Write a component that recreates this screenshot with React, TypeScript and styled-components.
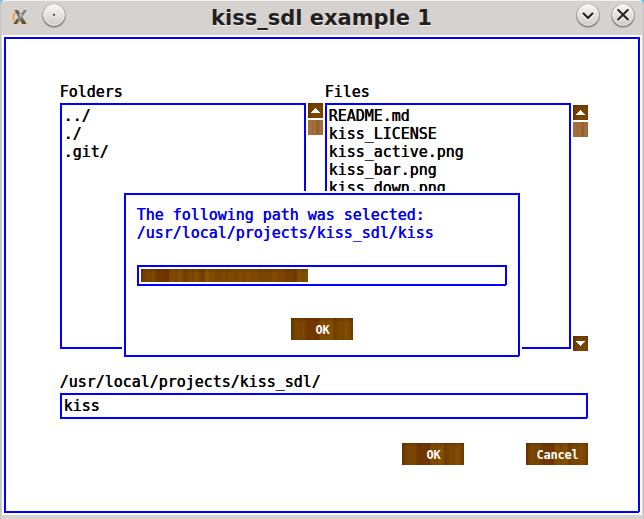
import React from "react";
import styled, { createGlobalStyle, css } from "styled-components";

const GlobalStyle = createGlobalStyle`
  * { box-sizing: border-box; }
  body { margin: 0; background: #d6d2cf; overflow: hidden; }
`;

const blue = "#0000ff";
const mono = '"DejaVu Sans Mono", monospace';

/* Regular glyphs widened sideways only: heavy stems, thin bars. */
const smearedText = css`
  font: 15px/18px ${mono};
  letter-spacing: -0.03px;
  white-space: pre;
  text-shadow: -0.6px 0 0 currentColor;
`;

const woodGrain = css`
  background:
    linear-gradient(180deg, rgba(50, 20, 0, 0.22), transparent 4px),
    repeating-linear-gradient(90deg, rgba(55, 22, 0, 0.12) 0 1px, transparent 3px 8px, rgba(60, 25, 0, 0.12) 10px, transparent 12px 17px),
    linear-gradient(90deg, #683800 0, #784400 5px, #7f4900 12px, #743b00 15px, #703500 27px, #7f4a00 29px, #824e00 41px, #743f00 43px, #824e00 55px, #733e00 62px, #895600 66px, #7b4700 75px, #824d00 110px, #784500 125px, #814b00 135px, #723900 155px, #805000 157px);
`;

const Window = styled.div`
  width: 644px;
  height: 519px;
  display: flex;
  flex-direction: column;
  background: #d6d2cf;
  border-left: 1px solid #c5c3c2;
  border-right: 1px solid #c5c3c2;
  border-top: 1px solid #f2f0ef;
  border-radius: 5px 5px 0 0;
`;

const Desktop = styled.div`
  background: linear-gradient(180deg, #65c5ee 0 8px, #d6d2cf 8px 513px, #91c9de 519px);
`;

const TitleBar = styled.header`
  height: 34px;
  flex: none;
  display: grid;
  grid-template-columns: 11px 16px 14px 24px 1fr 24px 11px 24px 8px;
  align-items: start;
  background: #d6d2cf;
  border-radius: 5px 5px 0 0;
`;

const AppIcon = styled.svg`
  grid-column: 2;
  margin-top: 8px;
`;

const RoundIcon = styled.svg<{ $column: number }>`
  grid-column: ${(p) => p.$column};
  margin-top: 2px;
`;

const Title = styled.h1`
  grid-column: 5;
  margin: 4px 0 0 145px;
  font: bold 21px/27px "DejaVu Sans", sans-serif;
  white-space: nowrap;
  color: #221f1e;
  text-shadow: 0 1px 0 #f4f2f1;
`;

const Client = styled.main`
  width: 640px;
  height: 480px;
  margin-left: 1px;
  padding: 2px;
  background: #fff;
`;

const Framed = styled.div`
  position: relative;
  border: 2px solid ${blue};
  background: #fff;
  &::after {
    content: "";
    position: absolute;
    right: -2px;
    bottom: -2px;
    width: 1px;
    height: 1px;
    background: #fff;
  }
`;

const MainFrame = styled(Framed)`
  height: 476px;
  width: 636px;
  padding: 43px 0 0 54px;
`;

const Lists = styled.div`
  display: flex;
  height: 267px;
  gap: 2px;
`;

const Label = styled.div`
  height: 21px;
  ${smearedText}
  line-height: 20px;
  color: #000;
`;

const ListBox = styled(Framed)`
  width: 246px;
  height: 246px;
  overflow: hidden;
  padding: 2px 0 0 2px;
`;

const ListItem = styled.div`
  ${smearedText}
  color: #000;
`;

const ScrollBar = styled.div<{ $offset: number }>`
  width: 15px;
  height: 246px;
  margin-top: ${(p) => 21 + p.$offset}px;
  display: flex;
  flex-direction: column;
`;

const ScrollButton = styled.div<{ $last?: boolean }>`
  width: 15px;
  height: 15px;
  flex: none;
  margin-top: ${(p) => (p.$last ? "auto" : "0")};
  ${woodGrain}
  svg { display: block; }
`;

const Knob = styled.div`
  width: 15px;
  height: 15px;
  margin-top: 2px;
  background: linear-gradient(90deg, #a26e38, #a4733e 3px, #976433 5px, #a6753f 6px, #966232 9px, #8d5b2e 10px, #a3713c 12px, #996836);
`;

const PathLabel = styled(Label)`
  margin-top: 23px;
`;

const Entry = styled(Framed)`
  width: 528px;
  height: 26px;
  padding: 2px 0 0 2px;
  ${smearedText}
`;

const Actions = styled.div`
  width: 528px;
  margin-top: 24px;
  display: flex;
  justify-content: flex-end;
  gap: 62px;
`;

const WoodButton = styled.button`
  width: 62px;
  height: 22px;
  border: 0;
  padding: 1px 0 0 1px;
  ${woodGrain}
  color: #fff;
  font: bold 12px/22px ${mono};
  letter-spacing: -0.22px;
  text-align: center;
`;

const Dialog = styled(Framed)`
  position: absolute;
  left: 118px;
  top: 154px;
  width: 396px;
  height: 164px;
  padding: 11px 11px 0;
  outline: 2px solid #fff;
  display: flex;
  flex-direction: column;
  align-items: center;
`;

const Message = styled.div`
  width: 100%;
  ${smearedText}
  color: #0000f0;
`;

const ProgressTrack = styled(Framed)`
  width: 370px;
  height: 21px;
  margin: 23px 0 32px;
  padding: 2px;
`;

const ProgressFill = styled.div`
  width: 167px;
  height: 13px;
  ${woodGrain}
`;

const Arrow = ({ down = false }: { down?: boolean }) => (
  <svg width="15" height="15" viewBox="0 0 15 15" shapeRendering="crispEdges">
    <path
      fill="#fff"
      d={
        down
          ? "M3 5h9v1h-1v1h-1v1h-1v1h-1v1h-1v-1h-1v-1h-1v-1h-1v-1h-1z"
          : "M7 5h1v1h1v1h1v1h1v1h1v1h-9v-1h1v-1h1v-1h1v-1h1z"
      }
    />
  </svg>
);

const TitleButton = ({ column, kind }: { column: number; kind: "dot" | "down" | "close" }) => (
  <RoundIcon $column={column} width="24" height="26" viewBox="0 0 24 26">
    <defs>
      <linearGradient id={`face-${kind}`} x1="0" y1="0" x2="0" y2="1">
        <stop offset="0" stopColor="#f9f8f8" />
        <stop offset="1" stopColor="#cfccca" />
      </linearGradient>
      <radialGradient id={`shade-${kind}`}>
        <stop offset="0.78" stopColor="#5f5b59" />
        <stop offset="1" stopColor="#5f5b59" stopOpacity="0" />
      </radialGradient>
    </defs>
    <circle cx="12" cy="12.8" r="12.6" fill={`url(#shade-${kind})`} />
    <circle cx="12" cy="12" r="10.5" fill={`url(#face-${kind})`} stroke="#fcfcfc" strokeWidth="0.8" />
    {kind === "dot" && <circle cx="12" cy="11.8" r="1" fill="#262322" />}
    {kind === "down" && (
      <>
        <path d="M7 11.500 12 16.500l5-5" fill="none" stroke="#fff" strokeWidth="2" />
        <path d="M7 10 12 15 17 10" fill="none" stroke="#262322" strokeWidth="2.200" />
      </>
    )}
    {kind === "close" && (
      <>
        <path d="m7.200 8.200 9.600 9.600m0-9.600-9.600 9.600" fill="none" stroke="#fff" strokeWidth="2" />
        <path d="m7.200 6.900 9.600 9.600m0-9.600-9.600 9.600" fill="none" stroke="#262322" strokeWidth="2.100" strokeLinecap="round" />
      </>
    )}
  </RoundIcon>
);

const folders = ["../", "./", ".git/"];
const files = ["README.md", "kiss_LICENSE", "kiss_active.png", "kiss_bar.png", "kiss_down.png"];

export default function App() {
  return (
    <Desktop>
      <GlobalStyle />
      <Window>
        <TitleBar>
          <AppIcon width="16" height="16" viewBox="0 0 16 16">
            <path d="M4 4Q0 5 2 12" fill="none" stroke="#ff9a38" strokeWidth="1.600" />
            <path d="M2.500 1H6l8.500 14H10z" fill="#62635d" />
            <path d="M12 1h3L5.500 15H1.500z" fill="#80827c" />
            <path d="m4.500 10 2 1-2 4h-3zM10 11h2l2.500 4H10z" fill="#6f5417" />
            <path d="m6 5 3 0 2 1-2 3z" fill="#b3b3ad" />
          </AppIcon>
          <TitleButton column={4} kind="dot" />
          <Title>kiss_sdl example 1</Title>
          <TitleButton column={6} kind="down" />
          <TitleButton column={8} kind="close" />
        </TitleBar>
        <Client>
          <MainFrame>
            <Lists>
              <div>
                <Label>Folders</Label>
                <ListBox>
                  {folders.map((name) => (
                    <ListItem key={name}>{name}</ListItem>
                  ))}
                </ListBox>
              </div>
              <ScrollBar $offset={0}>
                <ScrollButton><Arrow /></ScrollButton>
                <Knob />
              </ScrollBar>
              <div>
                <Label>Files</Label>
                <ListBox>
                  {files.map((name) => (
                    <ListItem key={name}>{name}</ListItem>
                  ))}
                </ListBox>
              </div>
              <ScrollBar $offset={2}>
                <ScrollButton><Arrow /></ScrollButton>
                <Knob />
                <ScrollButton $last><Arrow down /></ScrollButton>
              </ScrollBar>
            </Lists>
            <PathLabel>/usr/local/projects/kiss_sdl/</PathLabel>
            <Entry>kiss</Entry>
            <Actions>
              <WoodButton>OK</WoodButton>
              <WoodButton>Cancel</WoodButton>
            </Actions>
            <Dialog>
              <Message>The following path was selected:</Message>
              <Message>/usr/local/projects/kiss_sdl/kiss</Message>
              <ProgressTrack>
                <ProgressFill />
              </ProgressTrack>
              <WoodButton>OK</WoodButton>
            </Dialog>
          </MainFrame>
        </Client>
      </Window>
    </Desktop>
  );
}
